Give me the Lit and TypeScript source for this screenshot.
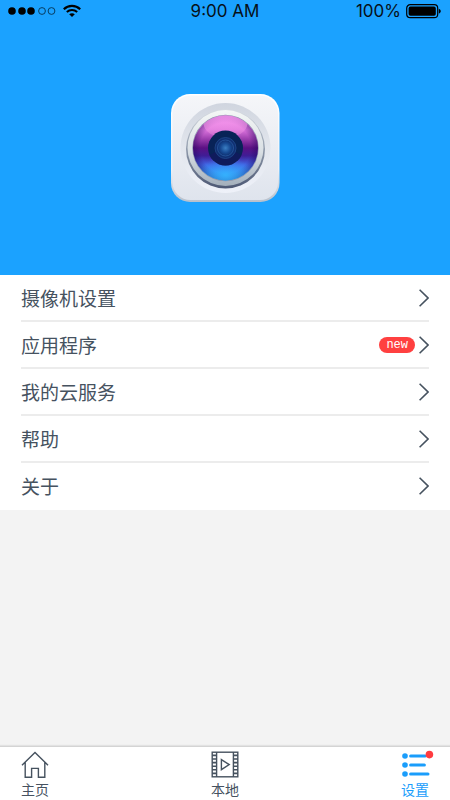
import { LitElement, html, css, svg, nothing } from "lit";
import { customElement, property } from "lit/decorators.js";
import { classMap } from "lit/directives/class-map.js";

@customElement("status-bar")
class StatusBar extends LitElement {
  static styles = css`
    :host {
      display: grid;
      grid-template-columns: 1fr auto 1fr;
      align-items: center;
      height: 22px;
      padding: 0 8px;
      color: #071018;
      font-family: Inter, "Liberation Sans", sans-serif;
      font-size: 17px;
      line-height: 22px;
    }
    svg {
      display: block;
    }
    .signal {
      display: flex;
      align-items: center;
      gap: 7px;
    }
    .power {
      display: flex;
      align-items: center;
      justify-content: flex-end;
      gap: 5px;
    }
  `;

  render() {
    return html`
      <div class="signal">
        <svg width="48" height="10" viewBox="0 0 48 10" aria-label="Signal">
          ${[4, 14, 23].map((x) => svg`<circle cx=${x} cy="5" r="3.8" fill="#000" />`)}
          ${[34, 43.5].map(
            (x) => svg`<circle cx=${x} cy="5" r="3.4" fill="none" stroke="#06324f" stroke-width="0.9" />`
          )}
        </svg>
        <svg width="18" height="14" viewBox="0 0 18 14" fill="none" stroke="#000" aria-label="Wi-Fi">
          <path d="M0.8 5.2C5.4 0.7 12.6 0.7 17.2 5.2" stroke-width="2.2" />
          <path d="M3.8 8.1C6.8 5.4 11.2 5.4 14.2 8.1" stroke-width="2" />
          <path d="M9 13L6.2 10.3C7.8 8.9 10.2 8.9 11.8 10.3Z" fill="#000" stroke="none" />
        </svg>
      </div>
      <span>9:00 AM</span>
      <div class="power">
        <span>100%</span>
        <svg width="36" height="16" viewBox="0 0 36 16" aria-label="Battery">
          <rect x="0.7" y="1.7" width="31" height="13" rx="3.5" fill="none" stroke="#000" stroke-width="1.2" />
          <rect x="2.6" y="3.6" width="27.2" height="9.2" rx="1.8" fill="#000" />
          <path d="M32.8 5.8C35.4 6.6 35.4 9.8 32.8 10.6Z" fill="#000" />
        </svg>
      </div>
    `;
  }
}

@customElement("camera-logo")
class CameraLogo extends LitElement {
  static styles = css`
    :host,
    svg {
      display: block;
    }
  `;

  render() {
    return html`
      <svg width="110" height="110" viewBox="0 0 110 110" role="img" aria-label="Camera">
        <defs>
          <linearGradient id="body" x1="0" y1="0" x2="0" y2="1">
            <stop offset="0" stop-color="#f5f6f9" />
            <stop offset="1" stop-color="#dfe4ed" />
          </linearGradient>
          <linearGradient id="edge" x1="0" y1="0" x2="0" y2="1">
            <stop offset="0" stop-color="#ffffff" />
            <stop offset="0.7" stop-color="#eef1f6" />
            <stop offset="1" stop-color="#b8c0cc" />
          </linearGradient>
          <linearGradient id="well" x1="0" y1="0" x2="0" y2="1">
            <stop offset="0" stop-color="#d0d5df" />
            <stop offset="0.5" stop-color="#e2e6ed" />
            <stop offset="1" stop-color="#eef1f9" />
          </linearGradient>
          <linearGradient id="rim" x1="0" y1="0" x2="0" y2="1">
            <stop offset="0" stop-color="#d7dce2" />
            <stop offset="0.5" stop-color="#8f9aab" />
            <stop offset="1" stop-color="#4d5874" />
          </linearGradient>
          <linearGradient id="ring" x1="0" y1="0" x2="0" y2="1">
            <stop offset="0" stop-color="#f4f7f6" />
            <stop offset="0.55" stop-color="#d9dfe4" />
            <stop offset="1" stop-color="#a3afbb" />
          </linearGradient>
          <linearGradient id="glass" x1="0" y1="0" x2="0" y2="1">
            <stop offset="0" stop-color="#f591f2" />
            <stop offset="0.22" stop-color="#dc74de" />
            <stop offset="0.36" stop-color="#9c3fae" />
            <stop offset="0.5" stop-color="#5a1083" />
            <stop offset="0.62" stop-color="#3f1d96" />
            <stop offset="0.76" stop-color="#4166e6" />
            <stop offset="1" stop-color="#2fb8ff" />
          </linearGradient>
          <radialGradient id="shade">
            <stop offset="0.78" stop-color="#1c0458" stop-opacity="0" />
            <stop offset="1" stop-color="#1c0458" stop-opacity="0.4" />
          </radialGradient>
          <linearGradient id="glow" x1="0" y1="0" x2="0" y2="1">
            <stop offset="0" stop-color="#ff9df6" stop-opacity="0.9" />
            <stop offset="1" stop-color="#e88fdc" stop-opacity="0.35" />
          </linearGradient>
          <radialGradient id="sky">
            <stop offset="0" stop-color="#35b4ff" stop-opacity="0.9" />
            <stop offset="1" stop-color="#35a0ff" stop-opacity="0" />
          </radialGradient>
          <radialGradient id="core">
            <stop offset="0" stop-color="#3b7fc4" />
            <stop offset="0.6" stop-color="#174a93" />
            <stop offset="1" stop-color="#0f2f70" />
          </radialGradient>
          <clipPath id="lens"><circle cx="55.5" cy="55" r="32.5" /></clipPath>
          <clipPath id="pupil"><circle cx="55.5" cy="55" r="17.5" /></clipPath>
        </defs>
        <rect x="1" y="1" width="108.5" height="108" rx="19" fill="url(#edge)" />
        <rect x="2.5" y="2.5" width="105.5" height="104.5" rx="18" fill="url(#body)" />
        <circle cx="55.5" cy="55" r="45" fill="url(#well)" />
        <circle cx="55.5" cy="56" r="39.5" fill="url(#rim)" />
        <circle cx="55.5" cy="55" r="38" fill="url(#ring)" />
        <circle cx="55.5" cy="55" r="33.2" fill="#8d96ad" />
        <circle cx="55.5" cy="55" r="32.5" fill="url(#glass)" />
        <g clip-path="url(#lens)">
          <circle cx="55.5" cy="55" r="32.5" fill="url(#shade)" />
          <ellipse cx="55.5" cy="30" rx="22" ry="15" fill="url(#glow)" />
          <ellipse cx="55.5" cy="82" rx="28" ry="18" fill="url(#sky)" />
        </g>
        <circle cx="55.5" cy="55" r="17.5" fill="#082357" />
        <path d="M36 64L49 57H62L75 64V76H36Z" fill="#12195e" opacity="0.75" clip-path="url(#pupil)" />
        <circle cx="55.5" cy="55" r="10.5" fill="#102f72" stroke="#214a8d" stroke-width="0.8" />
        <circle cx="55.5" cy="55" r="8" fill="url(#core)" stroke="#2b62a8" stroke-width="0.7" />
      </svg>
    `;
  }
}

@customElement("menu-row")
class MenuRow extends LitElement {
  @property() label = "";
  @property() badge = "";

  static styles = css`
    :host {
      display: block;
    }
    .row {
      display: flex;
      align-items: center;
      gap: 4px;
      width: 100%;
      height: 47px;
      padding: 0 0 2px;
      border: 0;
      background: none;
      color: #46525f;
      font-family: "Noto Sans CJK SC", sans-serif;
      font-size: 19px;
      line-height: 28px;
      text-align: left;
      cursor: pointer;
    }
    .label {
      flex: 1;
    }
    .badge {
      padding: 0 7px;
      border-radius: 8px;
      background: #ff4040;
      color: #fff;
      font-family: "Liberation Mono", "Courier New", monospace;
      font-size: 12px;
      line-height: 16px;
    }
    svg {
      display: block;
    }
  `;

  render() {
    return html`
      <button class="row" type="button">
        <span class="label">${this.label}</span>
        ${this.badge ? html`<span class="badge">${this.badge}</span>` : nothing}
        <svg width="10" height="18" viewBox="0 0 10 18" fill="none" stroke="#46525f" stroke-width="1.6">
          <path d="M0.6 0.8L9 9L0.6 17.2" />
        </svg>
      </button>
    `;
  }
}

const homeIcon = svg`
  <path d="M1 14.2L14 1.4L27 14.2M4.2 11.4V26.2H10.6V17.4H17.4V26.2H23.8V11.4"
    fill="none" stroke="#46525f" stroke-width="1.4" />`;

const filmIcon = svg`
  <g fill="none" stroke="#46525f" stroke-width="1.4">
    <rect x="1.2" y="1.2" width="25.6" height="24.6" />
    <path d="M5.6 1V26M22.4 1V26" />
    <path d="M10.4 8.6L18.2 13.6L10.4 18.6Z" />
    <path stroke-width="1.6" d="M1.2 4.4H5.6M1.2 8H5.6M1.2 11.6H5.6M1.2 15.2H5.6M1.2 18.8H5.6M1.2 22.4H5.6
      M22.4 4.4H26.8M22.4 8H26.8M22.4 11.6H26.8M22.4 15.2H26.8M22.4 18.8H26.8M22.4 22.4H26.8" />
  </g>`;

const listIcon = svg`
  <g fill="#1a9dfb">
    <circle cx="4" cy="5" r="2.8" />
    <circle cx="4" cy="14" r="2.8" />
    <circle cx="4" cy="23" r="2.8" />
  </g>
  <path d="M9.6 5H24M9.6 14H23.4M9.6 23H27" fill="none" stroke="#1a9dfb" stroke-width="3" stroke-linecap="round" />
  <circle cx="28.4" cy="3.6" r="3.8" fill="#ff3b3f" />`;

const tabs = [
  { label: "主页", icon: homeIcon, active: false },
  { label: "本地", icon: filmIcon, active: false },
  { label: "设置", icon: listIcon, active: true },
];

const menu = [
  { label: "摄像机设置", badge: "" },
  { label: "应用程序", badge: "new" },
  { label: "我的云服务", badge: "" },
  { label: "帮助", badge: "" },
  { label: "关于", badge: "" },
];

@customElement("app-root")
class AppRoot extends LitElement {
  static styles = css`
    :host {
      display: flex;
      flex-direction: column;
      min-height: 100vh;
      background: #f3f3f3;
      font-family: "Noto Sans CJK SC", sans-serif;
    }
    .hero {
      background: #1ba2ff;
    }
    .brand {
      display: flex;
      justify-content: center;
      padding: 71px 0 72px;
    }
    .menu {
      margin: 0;
      padding: 0 21px;
      list-style: none;
      background: #fff;
    }
    .item + .item {
      box-shadow: 0 -2px 0 #ececec;
    }
    .tabs {
      display: flex;
      justify-content: space-between;
      margin-top: auto;
      padding: 4px 21px 0;
      border-top: 1px solid #d4d4d4;
      box-shadow: 0 -1px 1px #e2e2e2;
      background: #fff;
    }
    .tab {
      display: flex;
      flex-direction: column;
      align-items: center;
      height: 49px;
      color: #46525f;
      font-size: 14px;
      line-height: 20px;
      text-decoration: none;
    }
    .tab.active {
      color: #1a9dfb;
    }
    .icon {
      display: block;
      overflow: visible;
    }
  `;

  render() {
    return html`
      <header class="hero">
        <status-bar></status-bar>
        <div class="brand"><camera-logo></camera-logo></div>
      </header>
      <ul class="menu">
        ${menu.map(
          (m) => html`<li class="item"><menu-row .label=${m.label} .badge=${m.badge}></menu-row></li>`
        )}
      </ul>
      <nav class="tabs">
        ${tabs.map(
          (t) => html`
            <a class=${classMap({ tab: true, active: t.active })} href="#">
              <svg class="icon" width="28" height="28" viewBox="0 0 28 28" aria-hidden="true">${t.icon}</svg>
              <span>${t.label}</span>
            </a>
          `
        )}
      </nav>
    `;
  }
}
